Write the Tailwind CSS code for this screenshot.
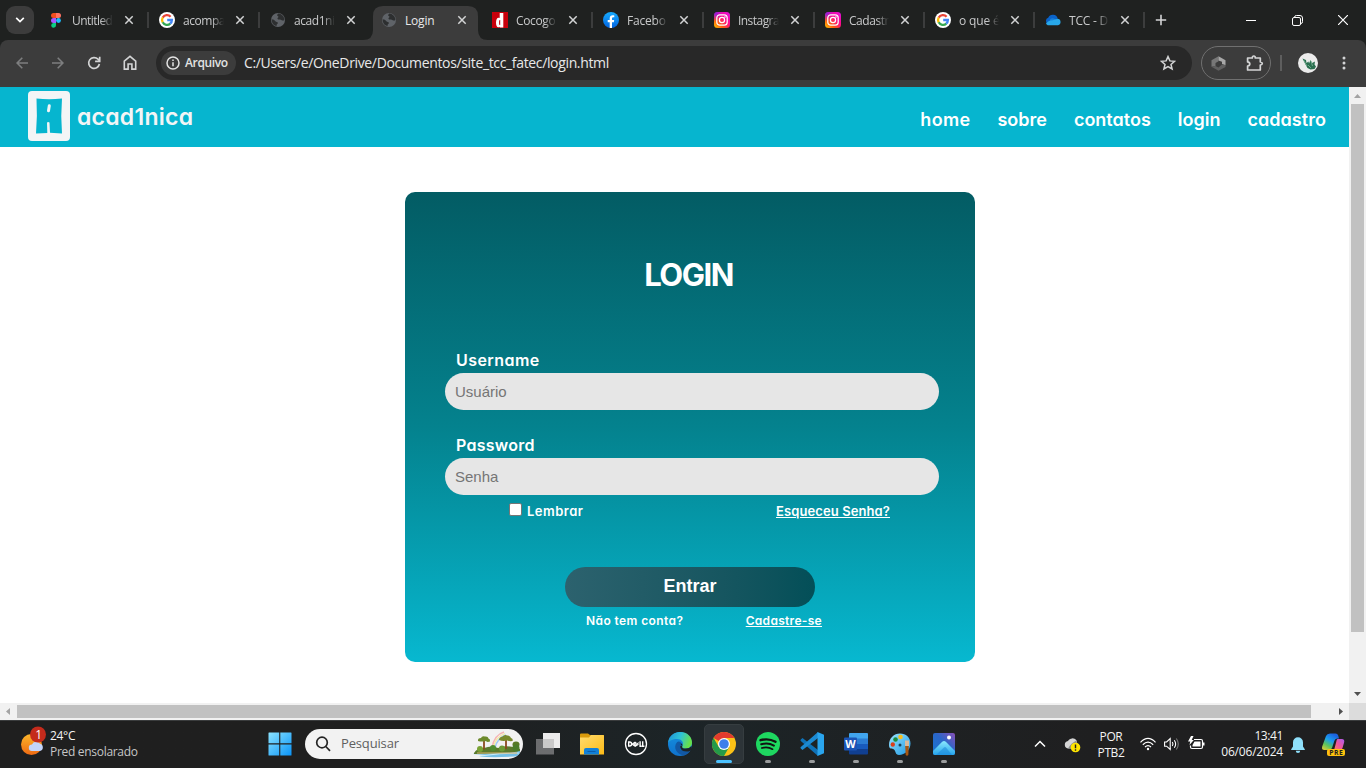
<!DOCTYPE html>
<html lang="pt-BR">
<head>
<meta charset="utf-8">
<title>Login</title>
<script src="https://cdn.jsdelivr.net/npm/@tailwindcss/browser@4"></script>
</head>
<body class="w-[1366px] h-[768px] overflow-hidden flex flex-col bg-white font-['Open_Sans',sans-serif]">

<svg class="absolute" width="0" height="0">
  <defs>
    <linearGradient id="ig" x1="0" y1="1" x2="1" y2="0"><stop offset="0" stop-color="#ffc800"/><stop offset=".3" stop-color="#ff5a10"/><stop offset=".6" stop-color="#ff0a88"/><stop offset="1" stop-color="#e010e8"/></linearGradient>
    <radialGradient id="ig2" cx="0" cy="0" r=".6"><stop offset="0" stop-color="#5a20ff"/><stop offset="1" stop-color="#b010ff" stop-opacity="0"/></radialGradient>
    <linearGradient id="fbk" x1="0" y1="0" x2="0" y2="1"><stop offset="0" stop-color="#18acfe"/><stop offset="1" stop-color="#0163e0"/></linearGradient>
    <linearGradient id="win" x1="0" y1="0" x2="1" y2="1"><stop offset="0" stop-color="#8be3ff"/><stop offset="1" stop-color="#0a94f8"/></linearGradient>
    <linearGradient id="sun" x1="0" y1="0" x2="0" y2="1"><stop offset="0" stop-color="#fbb62a"/><stop offset="1" stop-color="#ef6a13"/></linearGradient>
    <linearGradient id="fold" x1="0" y1="0" x2="1" y2="1"><stop offset="0" stop-color="#ffdc70"/><stop offset="1" stop-color="#fdbb16"/></linearGradient>
    <linearGradient id="edg" x1="0" y1="0" x2="1" y2=".3"><stop offset="0" stop-color="#1c8fd8"/><stop offset=".55" stop-color="#2fc3d6"/><stop offset="1" stop-color="#66e04c"/></linearGradient>
    <linearGradient id="edg2" x1="0" y1="0" x2="0" y2="1"><stop offset="0" stop-color="#1590df"/><stop offset="1" stop-color="#0f72cd"/></linearGradient>
    <linearGradient id="pho" x1="0" y1="1" x2="1" y2="0"><stop offset="0" stop-color="#1976d2"/><stop offset=".55" stop-color="#2a66c8"/><stop offset="1" stop-color="#8a4fb8"/></linearGradient>
    <linearGradient id="pho2" x1="0" y1="0" x2="0" y2="1"><stop offset="0" stop-color="#8be8fd"/><stop offset="1" stop-color="#25a4ec"/></linearGradient>
    <linearGradient id="pnt" x1="0" y1="0" x2="1" y2="1"><stop offset="0" stop-color="#9be4ff"/><stop offset="1" stop-color="#1e9be6"/></linearGradient>
    <linearGradient id="cp1" x1="0" y1="1" x2=".6" y2="0"><stop offset="0" stop-color="#f0d030"/><stop offset=".35" stop-color="#5cc45c"/><stop offset=".65" stop-color="#1a9df0"/><stop offset="1" stop-color="#1c62e0"/></linearGradient>
    <linearGradient id="cp2" x1="0" y1="1" x2="1" y2="0"><stop offset="0" stop-color="#ff8a4c"/><stop offset=".5" stop-color="#f0569c"/><stop offset="1" stop-color="#a95cf0"/></linearGradient>
    <symbol id="google" viewBox="0 0 16 16"><circle cx="8" cy="8" r="8" fill="#fff"/><g fill="none" stroke-width="2.3"><path d="M3.700 5.600A4.900 4.900 0 0 1 11.600 4.700" stroke="#ea4335"/><path d="M3.700 10.400A4.900 4.900 0 0 1 3.700 5.500" stroke="#fbbc05"/><path d="M11.300 11.600A4.900 4.900 0 0 1 3.700 10.300" stroke="#34a853"/><path d="M8.200 8H12.900A4.900 4.900 0 0 1 11.200 11.700" stroke="#4285f4"/></g></symbol>
    <symbol id="globe" viewBox="0 0 16 16"><circle cx="8" cy="8" r="7" fill="#5f6368"/><path d="M8.200 1.600C11.600 1.800 14.300 4.400 14.400 8c-1.500 1.300-2.700 0-3.800-.3-1.200-.3-2.300.3-3-.7-.5-1 .8-1.200.8-2.200 0-.7-1.500-.8-1.300-1.700zM1.600 7.200c1.600 0 3 .9 3.800 2 .6.9 2.400.5 2.500 1.700.1.9-1.400 1.200-1.300 2.200v1C3.700 13.500 1.600 11 1.600 7.200z" fill="#2d2f30"/></symbol>
    <symbol id="insta" viewBox="0 0 16 16"><rect width="16" height="16" rx="3.500" fill="url(#ig)"/><rect width="16" height="16" rx="3.500" fill="url(#ig2)"/><g fill="none" stroke="#fff" stroke-width="1.200"><rect x="2.800" y="2.800" width="10.400" height="10.400" rx="3"/><circle cx="8" cy="8" r="2.600"/></g><circle cx="11" cy="5" r=".8" fill="#fff"/></symbol>
    <symbol id="x" viewBox="0 0 10 10"><path d="M1.300 1.300 8.700 8.700M8.700 1.300 1.300 8.700" stroke="#d3d4d5" stroke-width="1.500"/></symbol>
  </defs>
</svg>

<!-- Tab strip -->
<div class="h-[40px] shrink-0 bg-[#1f2120] flex items-center text-[12px] text-[#c9cacb]">
  <button class="ml-[6px] w-[28px] h-[28px] rounded-[9px] bg-[#3c3c3c] grid place-items-center shrink-0"><svg width="10" height="6" viewBox="0 0 10 6" fill="none" stroke="#fff" stroke-width="1.700"><path d="M1.200 .8 5 4.600 8.800 .8"/></svg></button>
  <div class="w-[111px] ml-[6px] h-full pl-2 flex items-center shrink-0">
    <svg width="16" height="16" viewBox="0 0 16 16"><path d="M5.500 1H8v5H5.500a2.500 2.500 0 0 1 0-5z" fill="#f24e1e"/><path d="M8 1h2.500a2.500 2.500 0 0 1 0 5H8z" fill="#ff7262"/><path d="M5.500 6H8v5H5.500a2.500 2.500 0 0 1 0-5z" fill="#a259ff"/><circle cx="10.500" cy="8.500" r="2.400" fill="#1abcfe"/><path d="M5.500 11H8v2.300A2.400 2.400 0 1 1 5.500 11z" fill="#0acf83"/></svg>
    <span class="ml-2 mt-[2px] w-[41px] whitespace-nowrap tracking-[-0.550px] mask-r-from-70% mask-r-to-100%">Untitled</span><svg class="ml-[11px]" width="10" height="10"><use href="#x"/></svg><i class="ml-[13px] w-[2px] h-[16px] bg-[#3c3d3d]"></i>
  </div>
  <div class="w-[111px] h-full pl-2 flex items-center shrink-0">
    <svg width="16" height="16"><use href="#google"/></svg>
    <span class="ml-2 mt-[2px] w-[41px] whitespace-nowrap tracking-[-0.450px] mask-r-from-70% mask-r-to-100%">acompa</span><svg class="ml-[11px]" width="10" height="10"><use href="#x"/></svg><i class="ml-[13px] w-[2px] h-[16px] bg-[#3c3d3d]"></i>
  </div>
  <div class="w-[111px] h-full pl-2 flex items-center shrink-0">
    <svg width="16" height="16"><use href="#globe"/></svg>
    <span class="ml-2 mt-[2px] w-[41px] whitespace-nowrap tracking-[-0.450px] mask-r-from-70% mask-r-to-100%">acad1ni</span><svg class="ml-[11px]" width="10" height="10"><use href="#x"/></svg>
  </div>
  <div class="w-[111px] h-full pl-2 flex items-center shrink-0 relative text-[#e8e8e8]">
    <svg class="absolute left-[-10px] top-[6px]" width="126" height="34"><path d="M0 34q10 0 10-10V10Q10 0 20 0h85q10 0 10 10v14q0 10 10 10z" fill="#3c3c3c"/></svg>
    <svg class="relative" width="16" height="16"><use href="#globe"/></svg>
    <span class="relative ml-2 mt-[2px] w-[41px] whitespace-nowrap tracking-[-0.2px]">Login</span><svg class="relative ml-[11px]" width="10" height="10"><use href="#x"/></svg>
  </div>
  <div class="w-[111px] h-full pl-2 flex items-center shrink-0">
    <svg width="16" height="16" viewBox="0 0 16 16"><path fill="#c8000c" d="M0 0h16v16H0z"/><path d="M7.700 1 11.300 1v14.500H7.700v-.8C5.500 16.200 4 14.300 4 10.700s1.600-5.700 3.700-4.600zM8.200 8C7.300 7.600 7.100 8.700 7.100 10.500S7.300 13.400 8.200 13z" fill="#fff" fill-rule="evenodd"/></svg>
    <span class="ml-2 mt-[2px] w-[41px] whitespace-nowrap tracking-[-0.350px] mask-r-from-70% mask-r-to-100%">Cocogo</span><svg class="ml-[11px]" width="10" height="10"><use href="#x"/></svg><i class="ml-[13px] w-[2px] h-[16px] bg-[#3c3d3d]"></i>
  </div>
  <div class="w-[111px] h-full pl-2 flex items-center shrink-0">
    <svg width="16" height="16" viewBox="0 0 16 16"><circle cx="8" cy="8" r="8" fill="url(#fbk)"/><path d="M6.700 15.900V10.300H4.700V8h2V6.300c0-2 1.200-3.100 3-3.100.6 0 1.300.1 1.600.2v1.900h-1c-1 0-1.300.6-1.300 1.300V8h2.200l-.4 2.300H9v5.600z" fill="#fff"/></svg>
    <span class="ml-2 mt-[2px] w-[41px] whitespace-nowrap tracking-[-0.200px] mask-r-from-70% mask-r-to-100%">Facebo</span><svg class="ml-[11px]" width="10" height="10"><use href="#x"/></svg><i class="ml-[13px] w-[2px] h-[16px] bg-[#3c3d3d]"></i>
  </div>
  <div class="w-[111px] h-full pl-2 flex items-center shrink-0">
    <svg width="16" height="16"><use href="#insta"/></svg>
    <span class="ml-2 mt-[2px] w-[41px] whitespace-nowrap tracking-[-0.550px] mask-r-from-70% mask-r-to-100%">Instagra</span><svg class="ml-[11px]" width="10" height="10"><use href="#x"/></svg><i class="ml-[13px] w-[2px] h-[16px] bg-[#3c3d3d]"></i>
  </div>
  <div class="w-[110px] h-full pl-2 flex items-center shrink-0">
    <svg width="16" height="16"><use href="#insta"/></svg>
    <span class="ml-2 mt-[2px] w-[40px] whitespace-nowrap tracking-[-0.450px] mask-r-from-70% mask-r-to-100%">Cadastr</span><svg class="ml-[11px]" width="10" height="10"><use href="#x"/></svg><i class="ml-[13px] w-[2px] h-[16px] bg-[#3c3d3d]"></i>
  </div>
  <div class="w-[110px] h-full pl-2 flex items-center shrink-0">
    <svg width="16" height="16"><use href="#google"/></svg>
    <span class="ml-2 mt-[2px] w-[40px] whitespace-nowrap tracking-[-0.150px] mask-r-from-70% mask-r-to-100%">o que é</span><svg class="ml-[11px]" width="10" height="10"><use href="#x"/></svg><i class="ml-[13px] w-[2px] h-[16px] bg-[#3c3d3d]"></i>
  </div>
  <div class="w-[110px] h-full pl-2 flex items-center shrink-0">
    <svg width="16" height="16" viewBox="0 0 16 16"><path d="M3 12a3.300 3.300 0 0 1 .2-6.200A5 5 0 0 1 12.700 6.500L8 11z" fill="#0a63c9"/><path d="M5 7.500a4 4 0 0 1 5-.5l4 2.500-8 3.500z" fill="#1781dc"/><path d="M1 11.500C3 9 5 8.500 7 8.500l5.500-1.700A3.300 3.300 0 0 1 13 13.300H3.500c-1 0-2-.8-2.500-1.800z" fill="#28a8ea"/></svg>
    <span class="ml-2 mt-[2px] w-[40px] whitespace-nowrap tracking-[-0.200px] mask-r-from-70% mask-r-to-100%">TCC - D</span><svg class="ml-[11px]" width="10" height="10"><use href="#x"/></svg><i class="ml-[13px] w-[2px] h-[16px] bg-[#3c3d3d]"></i>
  </div>
  <svg class="ml-[8px] shrink-0" width="12" height="12" stroke="#d3d4d5" stroke-width="1.600"><path d="M6 .8v10.400M.8 6h10.400"/></svg>
  <svg class="ml-[79px] shrink-0" width="10" height="10" stroke="#fff"><path d="M0 5.500h10"/></svg>
  <svg class="ml-[36px] shrink-0" width="11" height="11" fill="none" stroke="#fff"><rect x=".5" y="2.500" width="8" height="8" rx="1.500"/><path d="M2.500 2.300Q2.500 .5 4.500 .5h3.500q2.500 0 2.500 2.500v3.500q0 2-1.500 2"/></svg>
  <svg class="ml-[35px] shrink-0" width="10" height="10" stroke="#fff" stroke-width="1.200"><path d="M0 0 10 10M10 0 0 10"/></svg>
</div>

<!-- Toolbar -->
<div class="h-[47px] shrink-0 bg-[#1f2120]">
 <div class="h-full bg-[#3c3c3c] rounded-t-[8px] flex items-center pb-px">
  <svg class="ml-[16px] shrink-0" width="12" height="12" fill="none" stroke="#7d7e7f" stroke-width="1.600"><path d="M12 6H1.500M6.300 .8 1.100 6l5.200 5.200"/></svg>
  <svg class="ml-[24px] shrink-0" width="12" height="12" fill="none" stroke="#7d7e7f" stroke-width="1.600"><path d="M0 6h10.500M5.700 .8 10.900 6l-5.200 5.200"/></svg>
  <svg class="ml-[23px] shrink-0" width="14" height="14" fill="none" stroke="#d3d4d5" stroke-width="1.700"><path d="M12.400 8A5.400 5.400 0 1 1 11 3.200l1.400 1.500"/><path d="M12.700 .8v4.600H8.100"/></svg>
  <svg class="ml-[22px] mb-px shrink-0" width="14" height="15" fill="none" stroke="#d3d4d5" stroke-width="1.600"><path d="M1.300 6.100 7 1.400l5.700 4.700v8H8.900V9H5.100v5.100H1.300z"/></svg>
  <div class="ml-[19px] w-[1036px] h-[34px] rounded-full bg-[#282828] flex items-center shrink-0 pl-[5px]">
    <div class="w-[75px] h-[24px] rounded-full bg-[#3c3c3c] flex items-center pl-[5px] text-[12px] font-semibold text-[#e3e3e3]"><svg class="mr-[5px] shrink-0" width="14" height="14" fill="none" stroke="#e3e3e3" stroke-width="1.500"><circle cx="7" cy="7" r="6"/><path d="M7 6.200v4M7 3.500V5"/></svg><span class="tracking-[-0.350px]">Arquivo</span></div>
    <span class="ml-[8px] mb-px w-[900px] text-[14px] text-[#e8e8e8] tracking-[-0.35px] whitespace-nowrap">C:/Users/e/OneDrive/Documentos/site_tcc_fatec/login.html</span>
    <svg class="ml-[16px] shrink-0" width="16" height="16" viewBox="0 0 16 16" fill="none" stroke="#d3d4d5" stroke-width="1.500"><path d="M8 1.600 9.900 5.900l4.700.4-3.600 3.100 1.100 4.600L8 11.600 3.900 14 5 9.400 1.400 6.300l4.700-.4z"/></svg>
  </div>
  <div class="ml-[9px] w-[70px] h-[34px] rounded-full border border-[#707070] flex items-center shrink-0 pl-[9px]">
    <svg width="15" height="15" viewBox="0 0 15 15"><path d="M.5 4.300 7.500 .3v5L4.500 7v3L.5 10.800z" fill="#777"/><path d="M7.500 .3 14.500 4.300v5L11 8V5.800L7.500 4.600z" fill="#a8a8a8"/><path d="M14.500 9v2L7.500 14.800 .5 10.800l4-.8 3 1.400L11 8.500z" fill="#606060"/></svg>
    <svg class="ml-[20px] mb-px" width="18" height="18" fill="none" stroke="#d3d4d5" stroke-width="1.700"><path d="M1.600 4H6.300Q6.300 2 7.800 2T9.300 4h5V8q2 .2 2 1.500t-2 1.500v5H1.600v-4q2.200-.4 2.200-2.100T1.600 7.900z" stroke-linejoin="round"/></svg>
  </div>
  <i class="ml-[9px] w-[2px] h-[16px] bg-[#5e5e5e]"></i>
  <svg class="ml-[16px] shrink-0" width="20" height="20"><circle cx="10" cy="10" r="10" fill="#ececec"/><path d="M4.500 5.500 8 7l.5 3 2-1.500.5 2 1.500-3.500 1.500 3 3-1.500-.5 3 1.500 2-1.500 2.500-4 .5-3-1.500-2-3.500z" fill="#2b6f50"/><path d="m5.500 7 3.500 6M13 8l1.500 5M10 12l3 3" stroke="#7fb79b" stroke-width=".8" fill="none"/></svg>
  <svg class="ml-[24px] shrink-0" width="4" height="14" fill="#d3d4d5"><circle cx="2" cy="2" r="1.500"/><circle cx="2" cy="7" r="1.500"/><circle cx="2" cy="12" r="1.500"/></svg>
 </div>
</div>

<!-- Page viewport -->
<div class="h-[616px] shrink-0 flex">
  <main class="w-[1349px] h-full">
    <header class="h-[60px] bg-[#06b5cf] flex items-center pl-[28px] text-white font-['Inter',sans-serif] [font-feature-settings:'cv11']">
      <svg class="shrink-0 mb-[2px]" width="42" height="50" viewBox="0 0 42 50"><rect width="42" height="50" rx="4" fill="#f3f5f6"/><path d="M8.500 7.500Q21 9 34 7.500 32.500 25 34 42.500L22 41.800 21.500 31.500Q20.300 30.500 19 31.500L19.300 42 8 42.500Q9.500 25 8.500 7.500z" fill="#06b5cf"/><path d="M21.300 14.800 20.500 19.800" stroke="#f3f5f6" stroke-width="3" stroke-linecap="round"/></svg>
      <span class="ml-[7px] w-[118px] text-[23px] leading-[28px] font-semibold text-[#f3f5f6] tracking-[0.250px]">acad1nica</span>
      <nav class="ml-auto mr-[23px] mt-[5px] flex gap-[27px] text-[18px] font-semibold"><a class="tracking-[0.3px]">home</a><a>sobre</a><a>contatos</a><a>login</a><a class="tracking-[0.050px]">cadastro</a></nav>
    </header>
    <form class="ml-[405px] mt-[45px] w-[570px] h-[470px] rounded-[10px] bg-linear-to-b from-[#035c64] via-[#04828e] to-[#07b8d0] flex flex-col text-white font-['Inter',sans-serif] [font-feature-settings:'cv11']">
      <h1 class="mt-[63px] mr-[3px] text-center text-[31px] leading-[40px] font-bold tracking-[-1.500px]">LOGIN</h1>
      <label class="ml-[51px] mt-[53px] text-[16px] leading-[24px] font-semibold tracking-[0.450px]">Username</label>
      <input placeholder="Usuário" class="ml-[40px] mt-[1px] w-[494px] h-[37px] rounded-full bg-[#e6e6e6] px-[10px] text-[15px] font-['Liberation_Sans',sans-serif] placeholder:text-[#757575]">
      <label class="ml-[51px] mt-[23px] text-[16px] leading-[24px] font-semibold tracking-[0.250px]">Password</label>
      <input placeholder="Senha" class="ml-[40px] mt-[1px] w-[494px] h-[37px] rounded-full bg-[#e6e6e6] px-[10px] text-[15px] font-['Liberation_Sans',sans-serif] placeholder:text-[#757575]">
      <div class="mt-[7px] ml-[104px] mr-[85px] flex text-[13px] leading-[18px] font-semibold">
        <i class="mt-[1px] w-[13px] h-[13px] rounded-[2px] border border-[#767676] bg-white"></i><span class="ml-[5px] tracking-[0.5px]">Lembrar</span><a class="ml-auto underline tracking-[0.1px]">Esqueceu Senha?</a>
      </div>
      <button type="button" class="mt-[47px] ml-[160px] w-[250px] h-[40px] shrink-0 rounded-full bg-linear-to-r from-[#2c626e] to-[#034f58] pb-[2px] text-[18px] font-bold font-['Liberation_Sans',sans-serif]">Entrar</button>
      <div class="mt-[5px] ml-[181px] mr-[153px] flex justify-between text-[12px] leading-[18px] font-semibold"><span class="tracking-[0.4px]">Não tem conta?</span><a class="underline tracking-[0.3px]">Cadastre-se</a></div>
    </form>
  </main>
  <div class="w-[17px] h-full bg-[#f1f1f1] flex flex-col items-center justify-between">
    <div class="h-[545px] flex flex-col items-center"><svg class="mt-[7px] mb-[6px] shrink-0" width="7" height="4"><path d="M0 4 3.500 0 7 4z" fill="#a3a3a3"/></svg><i class="w-[13px] h-[528px] shrink-0 bg-[#c1c1c1]"></i></div>
    <svg class="mb-[7px]" width="7" height="4"><path d="M0 0 3.500 4 7 0z" fill="#505050"/></svg>
  </div>
</div>
<div class="h-[17px] shrink-0 bg-[#f1f1f1] flex items-center">
  <svg class="ml-[6px]" width="4" height="7"><path d="M4 0 0 3.500 4 7z" fill="#a3a3a3"/></svg>
  <i class="ml-[7px] w-[1294px] h-[13px] bg-[#c1c1c1]"></i>
  <svg class="ml-[28px]" width="4" height="7"><path d="M0 0 4 3.500 0 7z" fill="#505050"/></svg>
  <i class="ml-auto w-[17px] h-full bg-[#dcdcdc]"></i>
</div>

<!-- Taskbar -->
<div class="h-[48px] shrink-0 bg-linear-to-r from-[#1f1f1f] from-30% via-[#1c2427] via-50% to-[#1f1f20] to-80% border-t border-[#3a3c3d] flex items-center text-[#f4f4f4]">
  <svg class="ml-[20px] mb-[7px] shrink-0" width="27" height="30"><circle cx="11.500" cy="18.500" r="10.500" fill="url(#sun)"/><path d="M12 25a3.200 3.200 0 0 1 0-6.400 4.500 4.500 0 0 1 8-.8 3.700 3.700 0 0 1 0 7.200z" fill="#c3d4fa"/><circle cx="18" cy="8.500" r="8" fill="#c42b1c"/><text x="15.200" y="12.700" font-size="12" fill="#fff">1</text></svg>
  <div class="ml-[3px] mb-[2px] w-[110px] text-[12px] leading-[16px] whitespace-nowrap"><div class="tracking-[-0.3px]">24°C</div><div class="text-[#c6c6c6] tracking-[-0.3px]">Pred ensolarado</div></div>
  <svg class="ml-[108px] mb-px shrink-0" width="24" height="24" fill="url(#win)" viewBox="0 0 24 24"><path d="M.5 1q0-.5.5-.5h10.200v10.800H.5zM12.300 .5H23q.5 0 .5.500v10.300H12.300zM.5 12.400h10.700v11.100H1q-.5 0-.5-.5zM12.300 12.400h11.200V23q0 .5-.5.500H12.300z"/></svg>
  <div class="ml-[13px] w-[218px] h-[30px] rounded-full bg-[#f2f2f2] flex items-center shrink-0 overflow-hidden mb-px">
    <svg class="ml-[10px] shrink-0" width="16" height="16" fill="none" stroke="#242424" stroke-width="1.700"><circle cx="7" cy="6.500" r="5.300"/><path d="m10.800 10.500 4.200 4.300"/></svg>
    <span class="ml-[10px] w-[131px] text-[13px] text-[#5f5f5f] tracking-[-0.15px]">Pesquisar</span>
    <svg class="shrink-0" width="51" height="28" viewBox="0 0 51 28"><path d="M20 18Q22 5 32 2" fill="none" stroke="#f5b5b5" stroke-width="1.500"/><path d="M21.500 18Q23 7 33 3.500" fill="none" stroke="#f6eaa0" stroke-width="1.300"/><path d="M23 18Q25 8 34 5" fill="none" stroke="#9fc9f5" stroke-width="1.500"/><path d="M1 24Q14 17 48 19v7q-24 2-41 .5l7-1.500z" fill="#74bfe6"/><path d="M8 26q20-3 39-3" stroke="#c8ecfa" fill="none"/><path d="M2 23q3-5 10-5 8-3 14 0 8-4 22 1v2q-8 2-22 2-12 1-24 1z" fill="#5a7a2c"/><path d="M12 10.500v9M34 8v11" stroke="#8a4a20" stroke-width="1.800"/><path d="M6 11q-.5-3 3-3 1-2.500 4-1.500 3-.5 3.500 2 2 .5 1.500 3-3 1-4-.5-4 1-8 0z" fill="#6d8a2c"/><path d="M27 10q0-3 3.500-3.500 2-2.500 5-1 3 .5 3.500 2.500 2.500 1 1.500 3-3 .5-5-.5-5 1-8.500-.5z" fill="#7a8a2c"/><ellipse cx="44" cy="14.500" rx="3.500" ry="3" fill="#587a28"/><circle cx="8" cy="19" r="3" fill="#79a235"/><circle cx="21" cy="18" r="3" fill="#4f8d32"/><circle cx="30" cy="18.500" r="3" fill="#6c9a35"/><circle cx="44" cy="18" r="3.500" fill="#4b7d2c"/><path d="M5 23h40" stroke="#d9b26c"/></svg>
  </div>
  <svg class="ml-[13px] mb-px shrink-0" width="24" height="24"><path d="M7 1h17v15H7z" fill="#ececec"/><path d="M0 7h18v15.500H0z" fill="#7f8182" fill-opacity=".8"/><path d="M7 7h11v9H7z" fill="#c9c9c9"/></svg>
  <svg class="ml-[20px] mb-[2px] shrink-0" width="24" height="24"><path d="M0 2.500Q0 1.500 1 1.500h7l2 1.500H24v6H0z" fill="#d99a0c"/><path d="M0 5.500h9l2-2.500H23q1 0 1 1V22.500H0z" fill="url(#fold)"/><path d="M4 22.500V18q0-2 2-2h11q2 0 2 2v4.500z" fill="#1180d8"/><path d="M7.500 19.500h8" stroke="#0a5cab"/></svg>
  <svg class="ml-[20px] mb-[2px] shrink-0" width="24" height="24"><circle cx="12" cy="12" r="10.500" fill="none" stroke="#fff" stroke-width="1.300"/><g fill="none" stroke="#fff" stroke-width="1.400"><path d="M4.700 10v4h.9a2 2 0 0 0 0-4zM16.100 9.300v5h1.700M18.700 9.300v5h1.700"/><path d="m8 12.200 3-2 1 .8-1.800 1.300 1 .8 3.500-2.500M8.200 12.200l3 2.200 3.300-2.100" stroke-width="1.100"/></g></svg>
  <svg class="ml-[20px] mb-[2px] shrink-0" width="24" height="24"><circle cx="12" cy="12" r="12" fill="url(#edg2)"/><path d="M0 11C1 3.500 6.500 0 12 0c7.500 0 12 5 12 10.500 0 4-3 6-6.500 6-3 0-4-1.200-3.300-2.300C16.500 10.500 13.500 7 9 7 4.500 7 1 9 0 11z" fill="url(#edg)"/><path d="M9 10.200c-4.500 5.300 0 12 6.500 13.300 3.500-.8 6-3 7.300-5.500-4 2.500-11 1.500-10.800-3 0-1.500 1-2.200 1.500-3C13 9.500 10.500 9 9 10.200z" fill="#1258a4"/><path d="M14.200 14.200Q12.500 13.500 12.800 11.300 15 12 14.200 14.200q-.7 2.300 3.300 2.300 4 0 6-2.500l.5 4.200-1.500.5Q18 20.500 14 18.500 11.500 16.500 12.200 13.500z" fill="#1c2427"/></svg>
  <div class="ml-[12px] mb-px w-[40px] h-[40px] rounded-[5px] bg-[#2d3438] border border-[#363d40] flex flex-col items-center shrink-0 pt-[7px]">
    <svg class="shrink-0" width="24" height="24" viewBox="0 0 24 24"><circle cx="12" cy="12" r="12" fill="#fbc116"/><path d="M12 12 1.600 6A12 12 0 0 1 22.400 6H12z" fill="#e33b2e"/><path d="M1.600 6A12 12 0 0 0 12 24l5.200-9L12 12 6.800 15z" fill="#249a49"/><circle cx="12" cy="12" r="6" fill="#fff"/><circle cx="12" cy="12" r="4.800" fill="#3d7eea"/></svg>
    <i class="mt-[4px] w-[16px] h-[3px] rounded-full bg-[#4cc2ff] shrink-0"></i>
  </div>
  <div class="ml-[12px] mb-px h-[40px] pt-[8px] flex flex-col items-center shrink-0"><svg class="shrink-0" width="24" height="24"><circle cx="12" cy="12" r="12" fill="#1ed760"/><g fill="none" stroke="#121212" stroke-linecap="round"><path d="M4.500 8.200q8-2.300 15 1.500" stroke-width="2.400"/><path d="M5.200 12.300q7-2 12.700 1.300" stroke-width="2"/><path d="M5.800 16q6-1.600 10.700 1.200" stroke-width="1.700"/></g></svg><i class="mt-[4px] w-[6px] h-[3px] rounded-full bg-[#9a9c9d] shrink-0"></i></div>
  <div class="ml-[20px] mb-px h-[40px] pt-[8px] flex flex-col items-center shrink-0"><svg class="shrink-0" width="24" height="24"><path d="M.8 7.500 2.500 6 18 18v6L.8 9q-.8-.8 0-1.500z" fill="#0f72b8"/><path d="M.8 16.500 2.500 18 18 6V0L.8 15q-.8.800 0 1.500z" fill="#1c8ad2"/><path d="m17.500 0 6.500 2.800v18.400L17.500 24z" fill="#2aa5ee"/></svg><i class="mt-[4px] w-[6px] h-[3px] rounded-full bg-[#9a9c9d] shrink-0"></i></div>
  <div class="ml-[20px] mb-px h-[40px] pt-[8px] flex flex-col items-center shrink-0"><svg class="shrink-0" width="24" height="24"><path d="M5 2q0-1 1-1h17q1 0 1 1v5H5z" fill="#41a5ee"/><path d="M5 6.500h19V12H5z" fill="#2b7cd3"/><path d="M5 12h19v5.500H5z" fill="#185abd"/><path d="M5 17h19v4.500q0 1-1 1H6q-1 0-1-1z" fill="#103f91"/><rect y="5.500" width="13" height="13" rx="1" fill="#1b54b5"/><text x="1.300" y="16" font-size="11" font-weight="700" fill="#fff" textLength="10.400" lengthAdjust="spacingAndGlyphs">W</text></svg><i class="mt-[4px] w-[6px] h-[3px] rounded-full bg-[#9a9c9d] shrink-0"></i></div>
  <div class="ml-[20px] mb-px h-[40px] pt-[8px] flex flex-col items-center shrink-0"><svg class="shrink-0" width="24" height="24"><path d="M12 1.500c6 0 10.500 4 10.500 10C22.500 18 17 23 11 23c-4 0-3-4-5-5.500S1 18 1 13C1 6 6 1.500 12 1.500z" fill="url(#pnt)"/><circle cx="12.500" cy="5" r="2.300" fill="#f8bd1c"/><circle cx="7.500" cy="7.500" r="2.300" fill="#1b8c3c"/><circle cx="4.800" cy="12.500" r="2.200" fill="#d9401c"/><circle cx="12" cy="13" r="1.500" fill="#17435e"/><path d="M17 8.500h4V14h-4z" fill="#d9b89a"/><path d="M17.200 14h3.600l-.5 9q-1.300 1.500-2.600 0z" fill="#a85610"/></svg><i class="mt-[4px] w-[6px] h-[3px] rounded-full bg-[#9a9c9d] shrink-0"></i></div>
  <div class="ml-[20px] mb-px h-[40px] pt-[8px] flex flex-col items-center shrink-0"><svg class="shrink-0" width="24" height="24"><rect x="1" y="1" width="22" height="22" rx="2" fill="url(#pho)"/><path d="M1 19 10.200 9.700q1.800-1.500 3.600 0L23 19v2q0 2-2 2H3q-2 0-2-2z" fill="url(#pho2)"/><path d="m4 23 8-7.500q1-.8 2 0L20 23z" fill="#1c86d8" opacity=".55"/><circle cx="17" cy="5.500" r="2" fill="#fff"/></svg><i class="mt-[4px] w-[6px] h-[3px] rounded-full bg-[#9a9c9d] shrink-0"></i></div>

  <svg class="ml-[78px] mb-px shrink-0" width="12" height="8" fill="none" stroke="#fff" stroke-width="1.500"><path d="m1 6.500 5-5 5 5"/></svg>
  <svg class="ml-[18px] shrink-0" width="17" height="16"><path d="M4 11.500a3.800 3.800 0 0 1 0-7.500 5 5 0 0 1 8.500-.5Q14 6 12 11.500z" fill="#d5d5d5"/><path d="M4 11.500Q7 6 12.500 3.500 14 8 10 11.500z" fill="#8a8c8d"/><circle cx="11.500" cy="10.500" r="4.800" fill="#fde300"/><path d="M11.500 7.500v3.700M11.500 12.300v1.400" stroke="#222" stroke-width="1.400"/></svg>
  <div class="ml-[14px] w-[32px] text-center text-[12px] leading-[16px] tracking-[-0.4px] whitespace-nowrap"><div>POR</div><div>PTB2</div></div>
  <svg class="ml-[13px] mb-px shrink-0" width="16" height="14" fill="none" stroke="#fff" stroke-width="1.200"><path d="M.5 5.300Q8-2.500 15.500 5.300M2.800 7.700q5.200-5 10.400 0M5 10q3-2.700 6 0"/><circle cx="8" cy="12" r="1.200" fill="#fff" stroke="none"/></svg>
  <svg class="ml-[8px] mb-px shrink-0" width="16" height="14" fill="none" stroke="#fff" stroke-width="1.100"><path d="M.6 5v4.200h2L6.200 12.500V1.500L2.600 5zM8.300 5q1.400 2 0 4M10.300 3.200q2.700 3.800 0 7.600"/><path d="M12.300 1.500q4 5.500 0 11" stroke="#777"/></svg>
  <svg class="ml-[8px] mb-[3px] shrink-0" width="17" height="15"><path d="M6 3.500h7q1.500 0 1.500 1.500v6q0 1.500-1.500 1.500H4Q2.500 12.500 2.500 11V9.500" fill="none" stroke="#fff" stroke-width="1.200"/><path d="M6.500 5.500h6v5H4.500V9zM15 6.500h1.500v3H15zM3 0 0 5.500h2.200L1.500 9l4.300-5H3.700L5.500 0z" fill="#fff"/></svg>
  <div class="ml-[8px] mb-[2px] w-[70px] text-right text-[12px] leading-[16px] tracking-[-0.2px] whitespace-nowrap"><div class="tracking-[-0.4px]">13:41</div><div>06/06/2024</div></div>
  <svg class="ml-[8px] shrink-0" width="14" height="16"><path d="M7 .3a5 5 0 0 1 5 5v4.200l1.800 2.700v.8H.2v-.8L2 9.500V5.300a5 5 0 0 1 5-5zM4.800 13.700h4.400a2.200 2.200 0 0 1-4.400 0z" fill="#8fe0fb"/></svg>
  <svg class="ml-[16px] shrink-0" width="26" height="24"><path d="M5 3Q6 .5 9 .5h5.500q2 0 2.700 2l.8 3h-2q-2 0-2.700 2.500l-2.300 7Q10 17 8 17H3.500Q.3 17 1.200 13.500z" fill="url(#cp1)"/><path d="M16.500 6h4.300q3.200 0 2.300 3.500L21.500 15q-.8 3-3 3h-6.500q1-1 1.500-2.500L15.200 9Q15.700 6 16.500 6z" fill="url(#cp2)"/><rect x="6" y="16" width="18" height="7" rx="2" fill="#ffc20e"/><text x="8.300" y="22" font-size="6.800" font-weight="700" fill="#1f1f1f" textLength="13.400">PRE</text></svg>
</div>
</body>
</html>
